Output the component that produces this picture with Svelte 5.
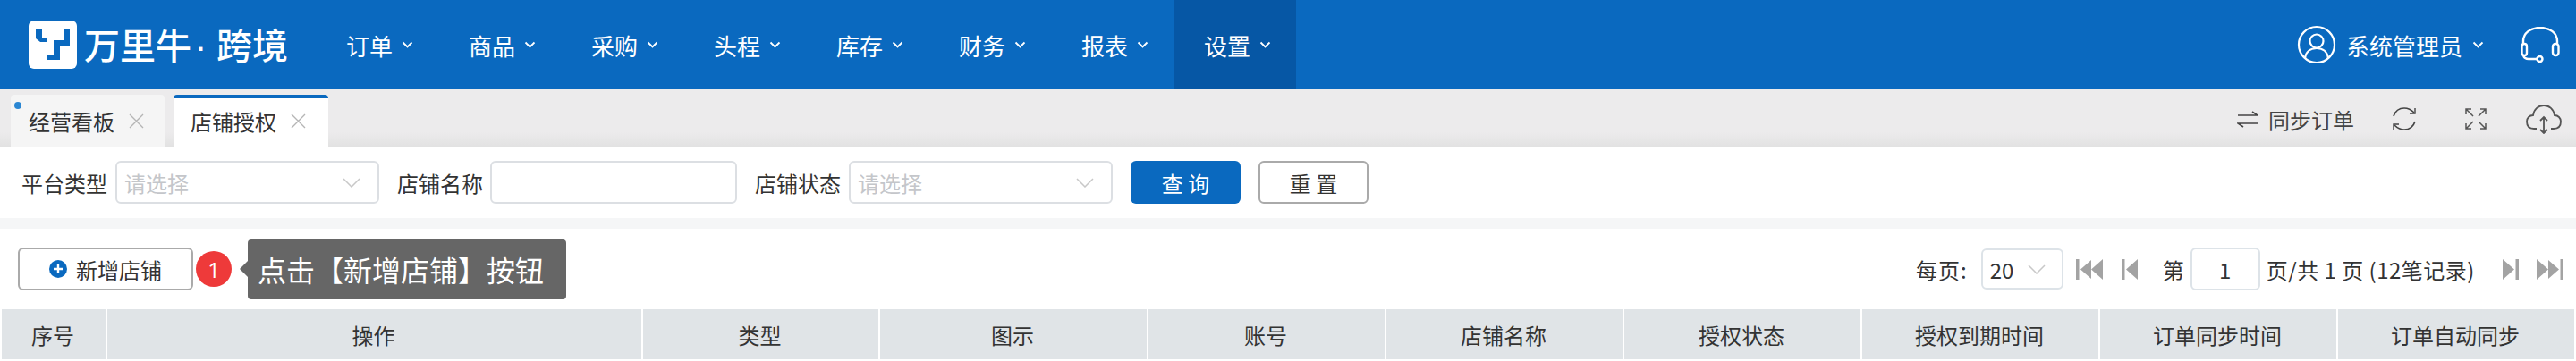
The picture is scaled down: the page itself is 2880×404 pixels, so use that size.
<script lang="ts">
  const navItems = ['订单', '商品', '采购', '头程', '库存', '财务', '报表', '设置'];
  const columns = [
    { label: '序号', width: 118 },
    { label: '操作', width: 599 },
    { label: '类型', width: 265 },
    { label: '图示', width: 300 },
    { label: '账号', width: 266 },
    { label: '店铺名称', width: 266 },
    { label: '授权状态', width: 266 },
    { label: '授权到期时间', width: 266 },
    { label: '订单同步时间', width: 266 },
    { label: '订单自动同步', width: 266 },
  ];
  const gridCols = columns.map((c) => c.width + 'px').join(' ');
</script>

<div class="page">
  <header class="topbar">
    <div class="brand">
      <svg class="logo" width="54" height="54" viewBox="0 0 54 54">
        <rect width="54" height="54" rx="6" fill="#fff" />
        <path d="M8 9H15V19H21V24H13L8 20Z" fill="#0a69bf" />
        <path d="M40 9H46V28H35V44H20V38H28V22H40Z" fill="#0a69bf" />
      </svg>
      <span class="brand-name">万里牛<i>·</i>跨境</span>
    </div>
    <nav class="nav">
      {#each navItems as item, i}
        <div class="nav-item" class:active={i === navItems.length - 1}>
          <span>{item}</span>
          <svg width="13" height="8" viewBox="0 0 13 8"><path d="M1.5 1.5L6.5 6.5L11.5 1.5" fill="none" stroke="#fff" stroke-width="1.8" /></svg>
        </div>
      {/each}
    </nav>
    <div class="user">
      <svg width="44" height="44" viewBox="0 0 44 44" fill="none" stroke="#fff" stroke-width="2.2">
        <circle cx="22" cy="22" r="20" />
        <circle cx="22" cy="18" r="7.5" />
        <path d="M9 37C10 30 15 26 22 26C29 26 34 30 35 37" />
      </svg>
      <span class="user-name">系统管理员</span>
      <svg width="13" height="8" viewBox="0 0 13 8"><path d="M1.5 1.5L6.5 6.5L11.5 1.5" fill="none" stroke="#fff" stroke-width="1.8" /></svg>
      <svg class="headset" width="44" height="40" viewBox="0 0 44 40" fill="none" stroke="#fff" stroke-width="2.4">
        <path d="M3 19V16C3 7 11 1 22 1C33 1 41 7 41 16V19" />
        <rect x="1.5" y="19" width="5.5" height="13" rx="2.7" />
        <rect x="36" y="19" width="6.5" height="13" rx="3" />
        <path d="M3 32C4 35 6 36 9 36H18" />
        <circle cx="21.5" cy="36" r="3" />
      </svg>
    </div>
  </header>

  <div class="tabbar">
    <div class="tab">
      <span class="dot"></span>
      <span>经营看板</span>
      <svg width="17" height="17" viewBox="0 0 17 17"><path d="M1 1L16 16M16 1L1 16" stroke="#b5b5b5" stroke-width="1.4" /></svg>
    </div>
    <div class="tab current">
      <span>店铺授权</span>
      <svg width="17" height="17" viewBox="0 0 17 17"><path d="M1 1L16 16M16 1L1 16" stroke="#b5b5b5" stroke-width="1.4" /></svg>
    </div>
    <div class="tab-tools">
      <svg class="swap" width="24" height="20" viewBox="0 0 24 20" fill="none" stroke="#444" stroke-width="1.6">
        <path d="M1 6H23L17 2" />
        <path d="M23 15H1L7 19" />
      </svg>
      <span class="sync">同步订单</span>
      <svg class="refresh" width="28" height="28" viewBox="0 0 28 28" fill="none" stroke="#444" stroke-width="1.7">
        <path d="M2 11C4 5 8 2 14 2C19 2 22 4 25 7" />
        <path d="M26 17C24 23 20 26 14 26C9 26 6 24 3 21" />
        <path d="M26 2V8H20M2 26V20H8" stroke-width="1.4" />
      </svg>
      <svg class="expand" width="24" height="24" viewBox="0 0 24 24" fill="none" stroke="#555" stroke-width="1.5">
        <path d="M1 7V1H7M1 1L9 9M23 7V1H17M23 1L15 9M1 17V23H7M1 23L9 15M23 17V23H17M23 23L15 15" />
      </svg>
      <svg class="cloud" width="40" height="33" viewBox="0 0 40 33" fill="none" stroke="#555" stroke-width="1.8">
        <path d="M12 27H9C4 27 1 24 1 19C1 15 4 12 8 12C9 5 14 1 20 1C26 1 31 5 32 12C36 12 39 15 39 19C39 24 36 27 31 27H28" />
        <path d="M20 14V32M16 18L20 14L24 18M16 28L20 32L24 28" />
      </svg>
    </div>
  </div>

  <div class="filters">
    <span class="field-label first">平台类型</span>
    <div class="select">
      <span class="placeholder">请选择</span>
      <svg width="20" height="11" viewBox="0 0 20 11"><path d="M1 1L10 10L19 1" fill="none" stroke="#c8c8c8" stroke-width="1.5" /></svg>
    </div>
    <span class="field-label name">店铺名称</span>
    <div class="text-input"></div>
    <span class="field-label">店铺状态</span>
    <div class="select">
      <span class="placeholder">请选择</span>
      <svg width="20" height="11" viewBox="0 0 20 11"><path d="M1 1L10 10L19 1" fill="none" stroke="#c8c8c8" stroke-width="1.5" /></svg>
    </div>
    <button class="btn primary">查 询</button>
    <button class="btn plain">重 置</button>
  </div>

  <div class="strip"></div>

  <div class="toolbar">
    <button class="add-btn">
      <svg width="20" height="20" viewBox="0 0 20 20">
        <circle cx="10" cy="10" r="10" fill="#0a69bf" />
        <path d="M10 5V15M5 10H15" stroke="#fff" stroke-width="2.4" />
      </svg>
      新增店铺
    </button>
    <span class="step">1</span>
    <div class="tip">点击【新增店铺】按钮</div>

    <div class="pager">
      <span class="per-page">每页:</span>
      <div class="size-select">
        <span>20</span>
        <svg width="20" height="11" viewBox="0 0 20 11"><path d="M1 1L10 10L19 1" fill="none" stroke="#c8c8c8" stroke-width="1.5" /></svg>
      </div>
      <svg class="pg first" width="30" height="23" viewBox="0 0 30 23" fill="#a3a3a3">
        <rect width="3.5" height="23" />
        <path d="M5 11.5L17 1V22Z" /><path d="M17 11.5L30 0V23Z" />
      </svg>
      <svg class="pg prev" width="18" height="23" viewBox="0 0 18 23" fill="#a3a3a3">
        <rect width="3.5" height="23" />
        <path d="M5 11.5L18 0V23Z" />
      </svg>
      <span class="di">第</span>
      <div class="page-input">1</div>
      <span class="total">页/共 1 页 (12笔记录)</span>
      <svg class="pg next" width="18" height="23" viewBox="0 0 18 23" fill="#a3a3a3">
        <rect x="14.5" width="3.5" height="23" />
        <path d="M13 11.5L0 0V23Z" />
      </svg>
      <svg class="pg last" width="30" height="23" viewBox="0 0 30 23" fill="#a3a3a3">
        <rect x="26.5" width="3.5" height="23" />
        <path d="M25 11.5L13 1V22Z" /><path d="M13 11.5L0 0V23Z" />
      </svg>
    </div>
  </div>

  <div class="thead" style:grid-template-columns={gridCols}>
    {#each columns as col}
      <div class="th">{col.label}</div>
    {/each}
  </div>
</div>

<style>
  :global(body) {
    margin: 0;
    background: #fff;
    overflow: hidden;
  }

  .page {
    width: 2880px;
    height: 404px;
    overflow: hidden;
    font-family: "Noto Sans CJK SC", "Noto Sans", sans-serif;
    font-size: 24px;
    color: #333;
  }

  .topbar {
    height: 100px;
    display: flex;
    align-items: center;
    background: #0a69bf;
    color: #fff;
  }

  .brand {
    display: flex;
    align-items: center;
    margin-left: 32px;
    width: 321px;
    gap: 8px;
  }

  .brand-name {
    font-size: 40px;
    font-weight: 500;
    white-space: nowrap;
    line-height: 54px;
  }

  .brand-name i {
    font-style: normal;
    display: inline-block;
    width: 28px;
    box-sizing: border-box;
    padding-right: 7px;
    text-align: center;
    font-family: "Liberation Sans", sans-serif;
  }

  .nav {
    display: flex;
    height: 100%;
  }

  .nav-item {
    width: 137px;
    box-sizing: border-box;
    padding-left: 34px;
    display: flex;
    align-items: center;
    gap: 10px;
    font-size: 26px;
  }

  .nav-item.active {
    background: #0657a5;
  }

  .user {
    margin-left: auto;
    display: flex;
    align-items: center;
    margin-right: 18px;
  }

  .user-name {
    font-size: 26px;
    margin: 0 11px;
  }

  .headset {
    margin-left: 41px;
  }

  .tabbar {
    height: 64px;
    box-sizing: border-box;
    padding: 6px 16px 0 12px;
    display: flex;
    gap: 10px;
    background: linear-gradient(#ecebec 0, #ecebec 48px, #e2e2e2 64px);
  }

  .tab {
    position: relative;
    width: 172px;
    box-sizing: border-box;
    padding-left: 20px;
    display: flex;
    align-items: center;
    gap: 16px;
    background: #f5f5f5;
    border-radius: 4px 4px 0 0;
  }

  .tab.current {
    background: #fff;
    border-top: 4px solid #0a69bf;
    padding-left: 19px;
    width: 173px;
    padding-bottom: 4px;
  }

  .dot {
    position: absolute;
    left: 4px;
    top: 8px;
    width: 8px;
    height: 8px;
    border-radius: 50%;
    background: #2b87d3;
  }

  .tab-tools {
    margin-left: auto;
    display: flex;
    align-items: center;
    height: 54px;
  }

  .sync {
    margin-left: 11px;
    color: #444;
  }

  .refresh {
    margin-left: 42px;
  }

  .expand {
    margin-left: 54px;
  }

  .cloud {
    margin-left: 44px;
  }

  .filters {
    height: 80px;
    display: flex;
    align-items: center;
  }

  .field-label {
    white-space: nowrap;
    margin: 0 9px 0 20px;
  }

  .field-label.first {
    margin-left: 24px;
  }

  .field-label.name {
    margin-right: 8px;
  }

  .select,
  .text-input {
    height: 48px;
    box-sizing: border-box;
    border: 2px solid #dcdfe3;
    border-radius: 6px;
    background: #fff;
  }

  .select {
    width: 295px;
    display: flex;
    align-items: center;
    justify-content: space-between;
    padding: 0 19px 0 8px;
  }

  .text-input {
    width: 276px;
  }

  .placeholder {
    color: #c4c6ca;
  }

  .btn {
    width: 123px;
    height: 48px;
    box-sizing: border-box;
    border-radius: 6px;
    font: inherit;
    padding: 0;
  }

  .primary {
    margin-left: 20px;
    background: #0a69bf;
    border: none;
    color: #fff;
  }

  .plain {
    margin-left: 20px;
    background: #fff;
    border: 2px solid #aaa;
    color: #333;
  }

  .strip {
    height: 12px;
    background: #f5f6f7;
  }

  .toolbar {
    height: 90px;
    display: flex;
    align-items: center;
    padding-left: 20px;
  }

  .add-btn {
    width: 196px;
    height: 48px;
    box-sizing: border-box;
    border: 2px solid #aaa;
    border-radius: 6px;
    background: #fff;
    font: inherit;
    color: #333;
    display: flex;
    align-items: center;
    justify-content: center;
    gap: 10px;
    padding: 0;
  }

  .step {
    margin-left: 3px;
    width: 40px;
    height: 40px;
    border-radius: 50%;
    background: #ee3a3a;
    color: #fff;
    display: flex;
    align-items: center;
    justify-content: center;
    font-family: "Open Sans", sans-serif;
  }

  .tip {
    position: relative;
    margin-left: 18px;
    width: 356px;
    height: 67px;
    box-sizing: border-box;
    background: #666;
    border-radius: 4px;
    color: #fff;
    font-size: 32px;
    line-height: 67px;
    padding-left: 11px;
    white-space: nowrap;
  }

  .tip::before {
    content: '';
    position: absolute;
    left: -9px;
    top: 24px;
    border-style: solid;
    border-width: 9px 9px 9px 0;
    border-color: transparent #666 transparent transparent;
  }

  .pager {
    margin-left: auto;
    margin-right: 14px;
    display: flex;
    align-items: center;
    white-space: nowrap;
  }

  .per-page {
    letter-spacing: 1px;
  }

  .size-select {
    margin-left: 15px;
    width: 92px;
    height: 46px;
    box-sizing: border-box;
    border: 2px solid #dde3e8;
    border-radius: 6px;
    display: flex;
    align-items: center;
    justify-content: space-between;
    padding: 0 18px 0 8px;
  }

  .pg.first {
    margin-left: 14px;
  }

  .pg.prev {
    margin-left: 21px;
  }

  .di {
    margin-left: 28px;
  }

  .page-input {
    margin-left: 7px;
    width: 78px;
    height: 48px;
    box-sizing: border-box;
    border: 2px solid #dde3e8;
    border-radius: 6px;
    display: flex;
    align-items: center;
    justify-content: center;
  }

  .total {
    margin-left: 7px;
    letter-spacing: 0.5px;
  }

  .pg.next {
    margin-left: 31px;
  }

  .pg.last {
    margin-left: 20px;
  }

  .thead {
    display: grid;
    margin-left: 2px;
    height: 56px;
  }

  .th {
    display: flex;
    align-items: center;
    justify-content: center;
    background: #e0e4e7;
    border-right: 2px solid #fff;
    color: #333;
    padding-right: 2px;
  }
</style>
